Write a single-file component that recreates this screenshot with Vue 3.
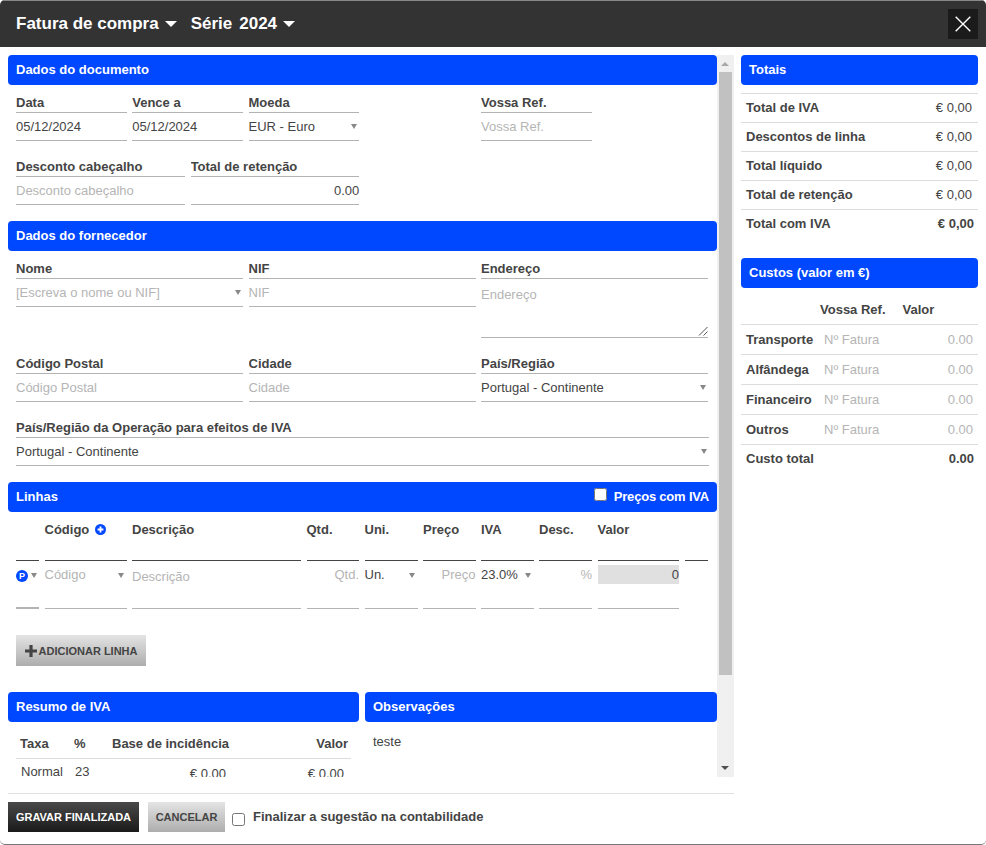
<script setup>
const totals = [
  { label: 'Total de IVA', value: '€ 0,00' },
  { label: 'Descontos de linha', value: '€ 0,00' },
  { label: 'Total líquido', value: '€ 0,00' },
  { label: 'Total de retenção', value: '€ 0,00' },
]
const costs = ['Transporte', 'Alfândega', 'Financeiro', 'Outros']
const lineHeads = [
  { t: '' }, { t: 'Código', plus: true }, { t: 'Descrição' }, { t: 'Qtd.' }, { t: 'Uni.' },
  { t: 'Preço' }, { t: 'IVA' }, { t: 'Desc.' }, { t: 'Valor' }, { t: '' },
]
</script>

<template>
  <div class="dialog">
    <header class="topbar">
      <span class="title">Fatura de compra</span><i class="caret"></i>
      <span class="title serie">Série</span><span class="title year">2024</span><i class="caret"></i>
      <button class="close" aria-label="Fechar">
        <svg width="16" height="16" viewBox="0 0 16 16"><path d="M.7.7l14.6 14.6M15.3.7L.7 15.3" stroke="#fff" stroke-width="1.4" fill="none"/></svg>
      </button>
    </header>

    <div class="body">
      <div class="leftcol">
        <div class="scrollwrap">
          <div class="scroll">
            <section>
              <h2 class="bar">Dados do documento</h2>
              <div class="grid six">
                <div class="f"><label>Data</label><div class="v">05/12/2024</div></div>
                <div class="f"><label>Vence a</label><div class="v">05/12/2024</div></div>
                <div class="f"><label>Moeda</label><div class="v sel">EUR - Euro<i class="arrow"></i></div></div>
                <div class="f col5"><label>Vossa Ref.</label><div class="v ph">Vossa Ref.</div></div>
                <div class="span3 two">
                  <div class="f"><label>Desconto cabeçalho</label><div class="v ph">Desconto cabeçalho</div></div>
                  <div class="f"><label>Total de retenção</label><div class="v num">0.00</div></div>
                </div>
              </div>
            </section>

            <section>
              <h2 class="bar">Dados do fornecedor</h2>
              <div class="grid six">
                <div class="f s2"><label>Nome</label><div class="v sel ph">[Escreva o nome ou NIF]<i class="arrow"></i></div></div>
                <div class="f s2"><label>NIF</label><div class="v ph">NIF</div></div>
                <div class="f s2"><label>Endereço</label>
                  <div class="v ph area">Endereço
                    <svg class="grip" width="10" height="10" viewBox="0 0 10 10"><path d="M1 9.5L9.5 1M5.5 9.5L9.5 5.5" stroke="#555" stroke-width="1" fill="none"/></svg>
                  </div>
                </div>
                <div class="f s2"><label>Código Postal</label><div class="v ph">Código Postal</div></div>
                <div class="f s2"><label>Cidade</label><div class="v ph">Cidade</div></div>
                <div class="f s2"><label>País/Região</label><div class="v sel">Portugal - Continente<i class="arrow"></i></div></div>
                <div class="f s6"><label>País/Região da Operação para efeitos de IVA</label><div class="v sel">Portugal - Continente<i class="arrow"></i></div></div>
              </div>
            </section>

            <section>
              <h2 class="bar linhas">Linhas
                <span class="vat"><input type="checkbox" /><span>Preços com IVA</span></span>
              </h2>
              <div class="lines">
                <div v-for="(h, i) in lineHeads" :key="i" class="lh">
                  {{ h.t }}
                  <svg v-if="h.plus" class="plus" width="11" height="11" viewBox="0 0 11 11"><circle cx="5.5" cy="5.5" r="5.5" fill="#0048ff"/><path d="M5.5 2.6v5.8M2.6 5.5h5.8" stroke="#fff" stroke-width="1.8"/></svg>
                </div>
                <div class="lc first"><span class="pbadge">P</span><i class="arrow in"></i></div>
                <div class="lc ph">Código<i class="arrow"></i></div>
                <div class="lc ph desc">Descrição</div>
                <div class="lc ph r">Qtd.</div>
                <div class="lc">Un.<i class="arrow"></i></div>
                <div class="lc ph r">Preço</div>
                <div class="lc">23.0%<i class="arrow"></i></div>
                <div class="lc ph r">%</div>
                <div class="lc valor"><div class="ro">0</div></div>
                <div class="lc none"></div>
              </div>
              <button class="btn grey add">
                <svg width="12" height="12" viewBox="0 0 12 12"><path d="M4.4 0h3.2v4.4H12v3.2H7.6V12H4.4V7.6H0V4.4h4.4z" fill="#444"/></svg>
                ADICIONAR LINHA
              </button>
            </section>

            <div class="pair">
              <section class="half">
                <h2 class="bar">Resumo de IVA</h2>
                <div class="vatsum">
                  <div class="vh">Taxa</div><div class="vh">%</div><div class="vh ra">Base de incidência</div><div class="vh ra last">Valor</div>
                  <div class="vd up">Normal</div><div class="vd up">23</div><div class="vd ra p7">€ 0,00</div><div class="vd ra p7">€ 0,00</div>
                </div>
              </section>
              <section class="half">
                <h2 class="bar">Observações</h2>
                <div class="obs">teste</div>
              </section>
            </div>
          </div>
          <div class="scrollbar">
            <i class="sb-up"></i>
            <div class="thumb"></div>
            <i class="sb-down"></i>
          </div>
        </div>

        <footer class="foot">
          <button class="btn dark">GRAVAR FINALIZADA</button>
          <button class="btn grey cancel">CANCELAR</button>
          <input class="fin" type="checkbox" />
          <span class="finlabel">Finalizar a sugestão na contabilidade</span>
        </footer>
      </div>

      <aside class="rightcol">
        <h2 class="bar">Totais</h2>
        <div class="totals">
          <div v-for="t in totals" :key="t.label" class="trow">
            <span class="tl">{{ t.label }}</span><span class="tv">{{ t.value }}</span>
          </div>
          <div class="trow strong">
            <span class="tl">Total com IVA</span><span class="tv">€ 0,00</span>
          </div>
        </div>
        <h2 class="bar">Custos (valor em €)</h2>
        <div class="costs">
          <div class="chead"><span class="ch1">Vossa Ref.</span><span class="ch2">Valor</span></div>
          <div v-for="c in costs" :key="c" class="crow">
            <span class="tl">{{ c }}</span><span class="ph cref">Nº Fatura</span><span class="ph cval">0.00</span>
          </div>
          <div class="crow total"><span class="tl">Custo total</span><span class="tv">0.00</span></div>
        </div>
      </aside>
    </div>
  </div>
</template>

<style>
html, body { margin: 0; background: #fff; }
</style>

<style scoped>
.dialog {
  width: 986px; height: 845px; box-sizing: border-box; overflow: hidden;
  background: #fff; position: relative; color: #444;
  font-family: "Liberation Sans", Arial, sans-serif; font-size: 13px;
  border-radius: 5px; border-bottom: 1px solid #777;
}
.topbar {
  height: 47px; box-sizing: border-box; background: #333; border-top: 1px solid #888;
  display: flex; align-items: center; padding: 0 8px 0 16px; color: #fff;
}
.title { font: bold 17px "Liberation Sans", Arial, sans-serif; }
.serie { margin-left: 14px; }
.year { margin-left: 7px; }
.caret { width: 0; height: 0; border: 6px solid transparent; border-top-color: #fff; border-bottom: 0; margin-left: 6px; }
.close {
  margin-left: auto; width: 30px; height: 30px; border: 0; padding: 0; background: #1b1b1b;
  display: flex; align-items: center; justify-content: center;
}
.body { display: flex; height: 797px; padding-top: 8px; box-sizing: border-box; }
.leftcol { width: 726px; margin-left: 8px; flex: none; }
.scrollwrap { display: flex; height: 722px; overflow: hidden; }
.scroll { width: 709px; height: 722px; overflow: hidden; flex: none; }
.scrollbar { width: 17px; background: #f0f0f0; display: flex; flex-direction: column; align-items: center; position: relative; }
.thumb { width: 13px; height: 603px; margin-top: 17px; background: #c1c1c1; }
.sb-up, .sb-down { position: absolute; width: 0; height: 0; left: 4px; border-left: 4px solid transparent; border-right: 4px solid transparent; }
.sb-up { top: 7px; border-bottom: 4px solid #a8a8a8; }
.sb-down { bottom: 7px; border-top: 4px solid #505050; }
.bar {
  margin: 0; height: 30px; padding: 0 8px; box-sizing: border-box; background: #0048ff;
  color: #fff; font: bold 13px/29px "Liberation Sans", Arial, sans-serif; border-radius: 4px;
  position: relative;
}
.grid { display: grid; padding: 7px 9px 16px 8px; column-gap: 5.5px; row-gap: 15px; }
.six { grid-template-columns: repeat(6, 1fr); }
.col5 { grid-column: 5; }
.span3 { grid-column: 1 / span 3; }
.two { display: grid; grid-template-columns: 1fr 1fr; column-gap: 6px; }
.s2 { grid-column: span 2; }
.s6 { grid-column: span 6; margin-right: -1px; }
.f label {
  display: block; height: 21px; box-sizing: border-box; line-height: 21px; font-weight: bold; font-size: 13px;
  border-bottom: 1px solid #b3b3b3; white-space: nowrap; overflow: hidden;
}
.v {
  height: 28px; line-height: 27px; box-sizing: border-box; border-bottom: 1px solid #b3b3b3;
  font-size: 13px; position: relative; white-space: nowrap;
}
.ph { color: #b5b5b5; }
.num { text-align: right; }
.area { height: 59px; line-height: 31px; }
.grip { position: absolute; right: 0; bottom: 1px; }
.arrow {
  position: absolute; right: 2px; top: 11px; width: 0; height: 0;
  border-left: 3px solid transparent; border-right: 3px solid transparent; border-top: 5px solid #888;
}
.vat { position: absolute; right: 8px; top: 0; display: flex; align-items: center; height: 29px; }
.vat input { width: 13px; height: 13px; margin: -4px 7px 0 0; }
.vat span { font-weight: bold; letter-spacing: -.2px; }
.lines {
  display: grid; padding: 0 0 0 8px; column-gap: 5.5px;
  grid-template-columns: 23px 82px 169px 52.5px 53px 52.5px 52.5px 53px 81.5px 23.5px;
}
.lh {
  height: 49px; box-sizing: border-box; padding-top: 9px; line-height: 18px; font-weight: bold;
  border-bottom: 1px solid #444; white-space: nowrap;
}
.lc {
  height: 48px; box-sizing: border-box; padding-top: 4px; line-height: 19px; position: relative;
  border-bottom: 1px solid #b3b3b3; white-space: nowrap;
}
.lc .arrow { top: 12px; right: 3px; }
.lc .arrow.in { right: auto; left: 15px; }
.first { border-bottom-width: 2px; }
.pbadge {
  position: absolute; left: 0; top: 9px; width: 12px; height: 12px; border-radius: 50%; background: #0048ff;
  color: #fff; font: bold 9px/12px "Liberation Sans", sans-serif; text-align: center;
}
.desc { padding-top: 6px; }
.r { text-align: right; }
.ro { background: #e0e0e0; text-align: right; height: 19px; color: #444; }
.none { border-bottom: 0; }
.plus { margin-left: 2px; vertical-align: -1px; }
.btn {
  border: 0; padding: 0; font: bold 11px "Liberation Sans", Arial, sans-serif; height: 31px; display: inline-flex;
  align-items: center; justify-content: center; box-sizing: border-box;
}
.grey { background: linear-gradient(#e4e4e4, #adadad); color: #444; }
.dark { background: linear-gradient(#4a4a4a, #1a1a1a); color: #fff; width: 131px; height: 30px; }
.add { margin: 26px 0 26px 8px; width: 130px; gap: 2px; display: flex; }
.pair { display: flex; gap: 6px; }
.half { flex: 1 1 0; min-width: 0; }
.half:first-child { flex: none; width: 351px; }
.vatsum {
  display: grid; margin: 0 0 0 8px; width: 335px; grid-template-columns: 54px 38px 125px 118px;
}
.vh { height: 37px; box-sizing: border-box; padding: 13px 4px 0; line-height: 18px; font-weight: bold; border-bottom: 1px solid #ddd; white-space: nowrap; }
.vd { padding: 6px 4px 0 5px; line-height: 18px; white-space: nowrap; }
.vd.up { padding-top: 4px; }
.ra { text-align: right; }
.last { padding-right: 3px; }
.p7 { padding-right: 7px; }
.obs { padding: 11px 8px; line-height: 18px; }
.foot {
  margin-top: 16px; border-top: 1px solid #e0e0e0; padding-top: 8px; display: flex; align-items: flex-start;
}
.cancel { width: 77px; margin-left: 9px; height: 30px; }
.fin { width: 13px; height: 13px; margin: 11px 0 0 7px; }
.finlabel { margin-left: 8px; font-weight: bold; line-height: 29px; white-space: nowrap; }
.rightcol { width: 237px; margin-left: 7px; flex: none; }
.totals { margin: 8px 0 20px; }
.trow {
  height: 29px; box-sizing: border-box; border-top: 1px solid #ddd; display: flex; justify-content: space-between;
  align-items: center; padding: 0 6px 2px 5px;
}
.tl { font-weight: bold; }
.strong .tv { font-weight: 700; margin-right: -2px; }
.chead { height: 37px; box-sizing: border-box; border-bottom: 1px solid #ddd; font-weight: bold; line-height: 43px; }
.ch1 { margin-left: 79px; }
.ch2 { margin-left: 17px; }
.crow {
  height: 30px; box-sizing: border-box; border-bottom: 1px solid #ddd; display: flex; align-items: center; padding: 0 5px;
}
.cref { position: absolute; margin-left: 78px; }
.cval { margin-left: auto; }
.total { border-bottom: 0; justify-content: space-between; height: 27px; padding-right: 4px; }
.total .tv { font-weight: 700; }
</style>
